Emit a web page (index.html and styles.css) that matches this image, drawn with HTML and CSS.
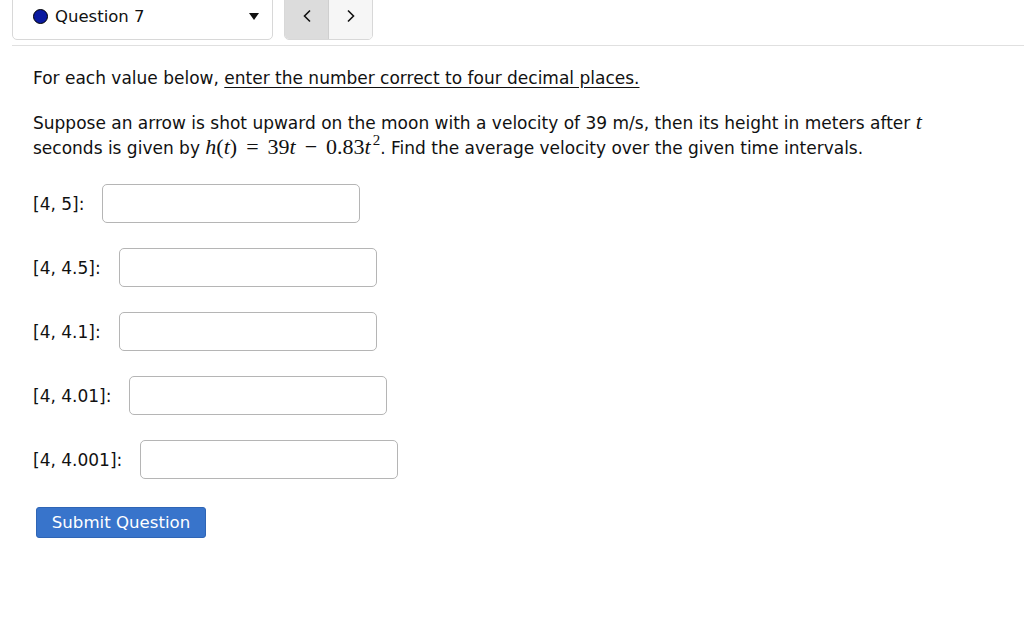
FILE: index.html
```html
<!DOCTYPE html>
<html>
<head>
<meta charset="utf-8">
<link rel="stylesheet" href="styles.css">
</head>
<body>
<header class="topbar">
  <div class="qselect">
    <span class="dot"></span>
    <span class="qlabel">Question 7</span>
    <span class="caret"></span>
  </div>
  <div class="nav">
    <button class="navbtn prev"><svg width="10" height="14" viewBox="0 0 10 14"><path d="M8 1.5 L2.5 7 L8 12.5" fill="none" stroke="#111" stroke-width="1.6"/></svg></button>
    <button class="navbtn next"><svg width="10" height="14" viewBox="0 0 10 14"><path d="M2 1.5 L7.5 7 L2 12.5" fill="none" stroke="#111" stroke-width="1.6"/></svg></button>
  </div>
</header>
<hr class="rule">
<main class="content">
  <p class="intro">For each value below, <u>enter the number correct to four decimal places.</u></p>
  <p class="problem">Suppose an arrow is shot upward on the moon with a velocity of 39 m/s, then its height in meters after <span class="m">t</span><br>seconds is given by <span class="math"><span class="m">h</span><span class="r">(</span><span class="m">t</span><span class="r">)</span><span class="op">=</span><span class="r">39</span><span class="m">t</span><span class="op">−</span><span class="r">0.83</span><span class="m">t</span><sup class="r">2</sup></span>. Find the average velocity over the given time intervals.</p>
  <div class="rows">
    <div class="row"><span class="lbl">[4, 5]:</span><input class="ans" type="text"></div>
    <div class="row"><span class="lbl">[4, 4.5]:</span><input class="ans" type="text"></div>
    <div class="row"><span class="lbl">[4, 4.1]:</span><input class="ans" type="text"></div>
    <div class="row"><span class="lbl">[4, 4.01]:</span><input class="ans" type="text"></div>
    <div class="row"><span class="lbl">[4, 4.001]:</span><input class="ans" type="text"></div>
  </div>
  <button class="submit">Submit Question</button>
</main>
</body>
</html>
```
FILE: styles.css
```css
* { box-sizing: border-box; }
body {
  margin: 0;
  background: #fff;
  font-family: "DejaVu Sans", Verdana, sans-serif;
  color: #111;
  font-size: 17px;
}
.topbar {
  display: flex;
  align-items: flex-end;
  gap: 11px;
  padding-left: 12px;
  height: 40px;
}
.qselect {
  width: 261px;
  height: 42px;
  margin-top: -2px;
  border: 1px solid #d8d8d8;
  border-radius: 0 0 5px 5px;
  display: flex;
  align-items: center;
  padding: 0 0 6px 20px;
}
.dot {
  width: 15px;
  height: 15px;
  border-radius: 50%;
  background: #0a1aa0;
  border: 1px solid #000;
  margin-right: 7px;
}
.qlabel {
  font-size: 16.5px;
  flex: 1;
}
.caret {
  width: 0; height: 0;
  border-left: 5px solid transparent;
  border-right: 5px solid transparent;
  border-top: 7px solid #111;
  margin-right: 13px;
}
.nav {
  display: flex;
  height: 42px;
  margin-top: -2px;
  border: 1px solid #d8d8d8;
  border-radius: 0 0 5px 5px;
  overflow: hidden;
}
.navbtn {
  width: 44px;
  border: 0;
  margin: 0;
  padding: 0 0 6px;
  display: flex;
  align-items: center;
  justify-content: center;
}
.prev { background: #dcdcdc; border-right: 1px solid #cfcfcf; }
.next { background: #f6f6f6; width: 43px; }
.rule {
  margin: 5px 0 0 12px;
  border: 0;
  border-top: 1px solid #e0e0e0;
}
.content {
  padding-left: 33px;
}
.intro {
  margin: 20px 0 0;
  line-height: 24px;
}
.intro u { text-underline-offset: 3px; }
.problem {
  margin: 20px 0 0;
  line-height: 24px;
}
.m { font-family: "Liberation Serif", serif; font-style: italic; font-size: 22px; }
.r { font-family: "Liberation Serif", serif; font-size: 22px; }
.op { font-family: "Liberation Serif", serif; font-size: 22px; margin: 0 9px; }
.math sup { font-size: 15px; vertical-align: 9px; line-height: 0; margin-left: 2px; }
.rows {
  margin-top: 24px;
  display: flex;
  flex-direction: column;
  gap: 25px;
}
.row {
  display: flex;
  align-items: center;
  height: 39px;
}
.lbl { margin-right: 18px; }
.ans {
  width: 258px;
  height: 39px;
  border: 1px solid #b5b5b5;
  border-radius: 5px;
  background: #fff;
  margin: 0;
}
.submit {
  margin: 28px 0 0 3px;
  width: 170px;
  height: 31px;
  background: #3874cb;
  border: 1px solid #2f65b5;
  border-radius: 3px;
  color: #fff;
  font-family: "DejaVu Sans", sans-serif;
  font-size: 16.6px;
  padding: 0 0 1px;
}
```
